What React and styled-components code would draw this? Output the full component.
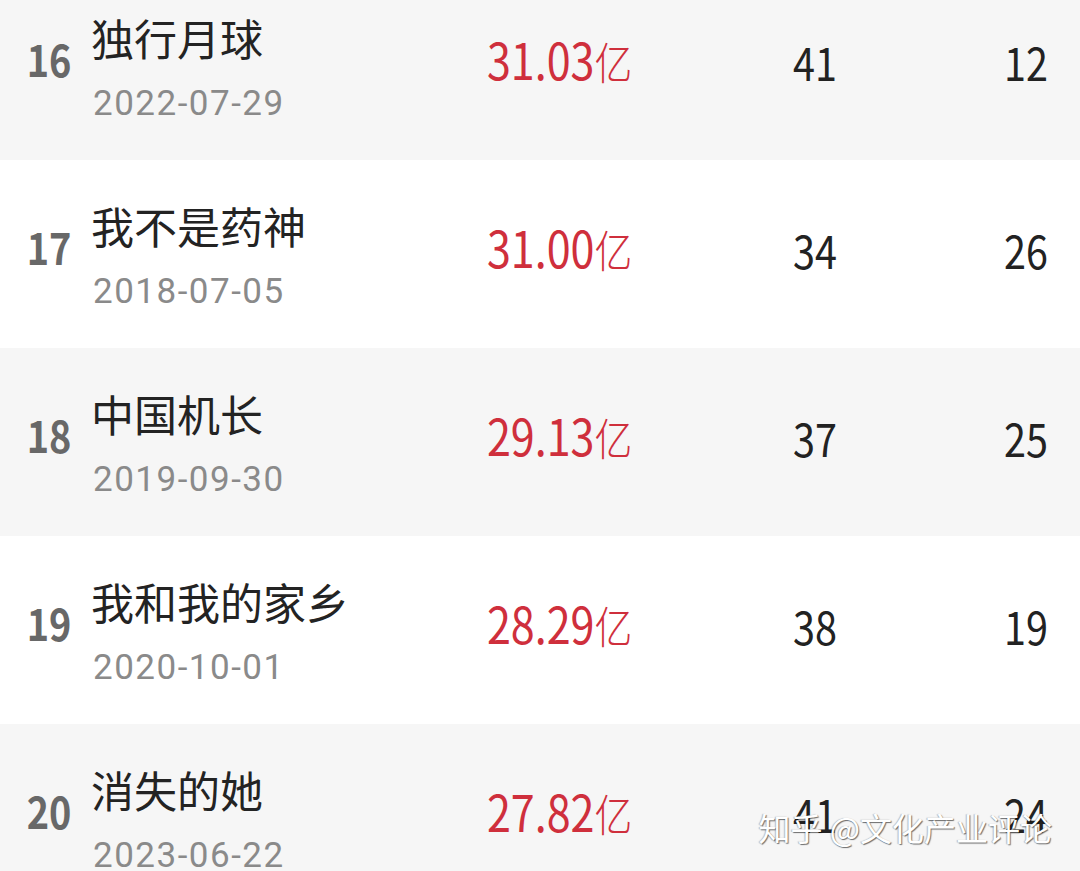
import React from "react";
import styled, { createGlobalStyle } from "styled-components";

const Global = createGlobalStyle`
  html, body { margin: 0; padding: 0; background: #ffffff; }
  body { width: 1080px; height: 871px; overflow: hidden; position: relative; }
`;

const List = styled.div`
  margin-top: -28px;
  display: flex;
  flex-direction: column;
`;

const Row = styled.div`
  height: 188px;
  box-sizing: border-box;
  display: grid;
  grid-template-columns: 66px 396px 250px 156px 155px;
  align-items: center;
  padding: 0 32px 0 25px;
  background: ${(p) => (p.$shade ? "#f6f6f6" : "#ffffff")};
`;

const Condensed = styled.div`
  font-family: "Noto Sans CJK SC", "Noto Sans", sans-serif;
  line-height: 1;
  white-space: nowrap;
  transform: scaleX(0.86);
`;

const Rank = styled(Condensed)`
  font-weight: 700;
  font-size: 44px;
  color: #686868;
  transform-origin: left center;
  margin-bottom: 16px;
  padding-left: 2px;
`;

const Info = styled.div`
  display: flex;
  flex-direction: column;
  gap: 19px;
  margin-top: 5px;
`;

const Title = styled.div`
  font-family: "Noto Sans CJK SC", sans-serif;
  font-size: 43px;
  line-height: 52px;
  color: #232323;
  white-space: nowrap;
`;

const DateText = styled.div`
  font-family: Roboto, "Noto Sans", sans-serif;
  font-size: 35px;
  line-height: 44px;
  letter-spacing: 1.5px;
  color: #8a8a8a;
  padding-left: 2px;
`;

const Money = styled(Condensed)`
  font-size: 50px;
  color: #cf2f3c;
  transform-origin: left center;
  margin-bottom: 17px;
`;

const Unit = styled.span`
  font-size: 44px;
  font-weight: 300;
`;

const Num = styled(Condensed)`
  font-size: 46px;
  color: #222222;
  text-align: ${(p) => p.$align || "center"};
  transform-origin: ${(p) => p.$align || "center"} center;
  margin-bottom: 11px;
`;

const Watermark = styled.div`
  position: absolute;
  right: 28px;
  bottom: 28px;
  font-family: "Noto Sans CJK SC", sans-serif;
  font-size: 32px;
  line-height: 1;
  color: #ffffff;
  text-shadow: 1px 1px 1px rgba(0, 0, 0, 0.55), -1px 0 1px rgba(0, 0, 0, 0.25);
  white-space: nowrap;
`;

const rows = [
  { rank: 16, title: "独行月球", date: "2022-07-29", money: "31.03", a: "41", b: "12" },
  { rank: 17, title: "我不是药神", date: "2018-07-05", money: "31.00", a: "34", b: "26" },
  { rank: 18, title: "中国机长", date: "2019-09-30", money: "29.13", a: "37", b: "25" },
  { rank: 19, title: "我和我的家乡", date: "2020-10-01", money: "28.29", a: "38", b: "19" },
  { rank: 20, title: "消失的她", date: "2023-06-22", money: "27.82", a: "41", b: "24" },
];

export default function App() {
  return (
    <>
      <Global />
      <List>
        {rows.map((r, i) => (
          <Row key={r.rank} $shade={i % 2 === 0}>
            <Rank>{r.rank}</Rank>
            <Info>
              <Title>{r.title}</Title>
              <DateText>{r.date}</DateText>
            </Info>
            <Money>
              {r.money}
              <Unit>亿</Unit>
            </Money>
            <Num>{r.a}</Num>
            <Num $align="right">{r.b}</Num>
          </Row>
        ))}
      </List>
      <Watermark>知乎 @文化产业评论</Watermark>
    </>
  );
}
